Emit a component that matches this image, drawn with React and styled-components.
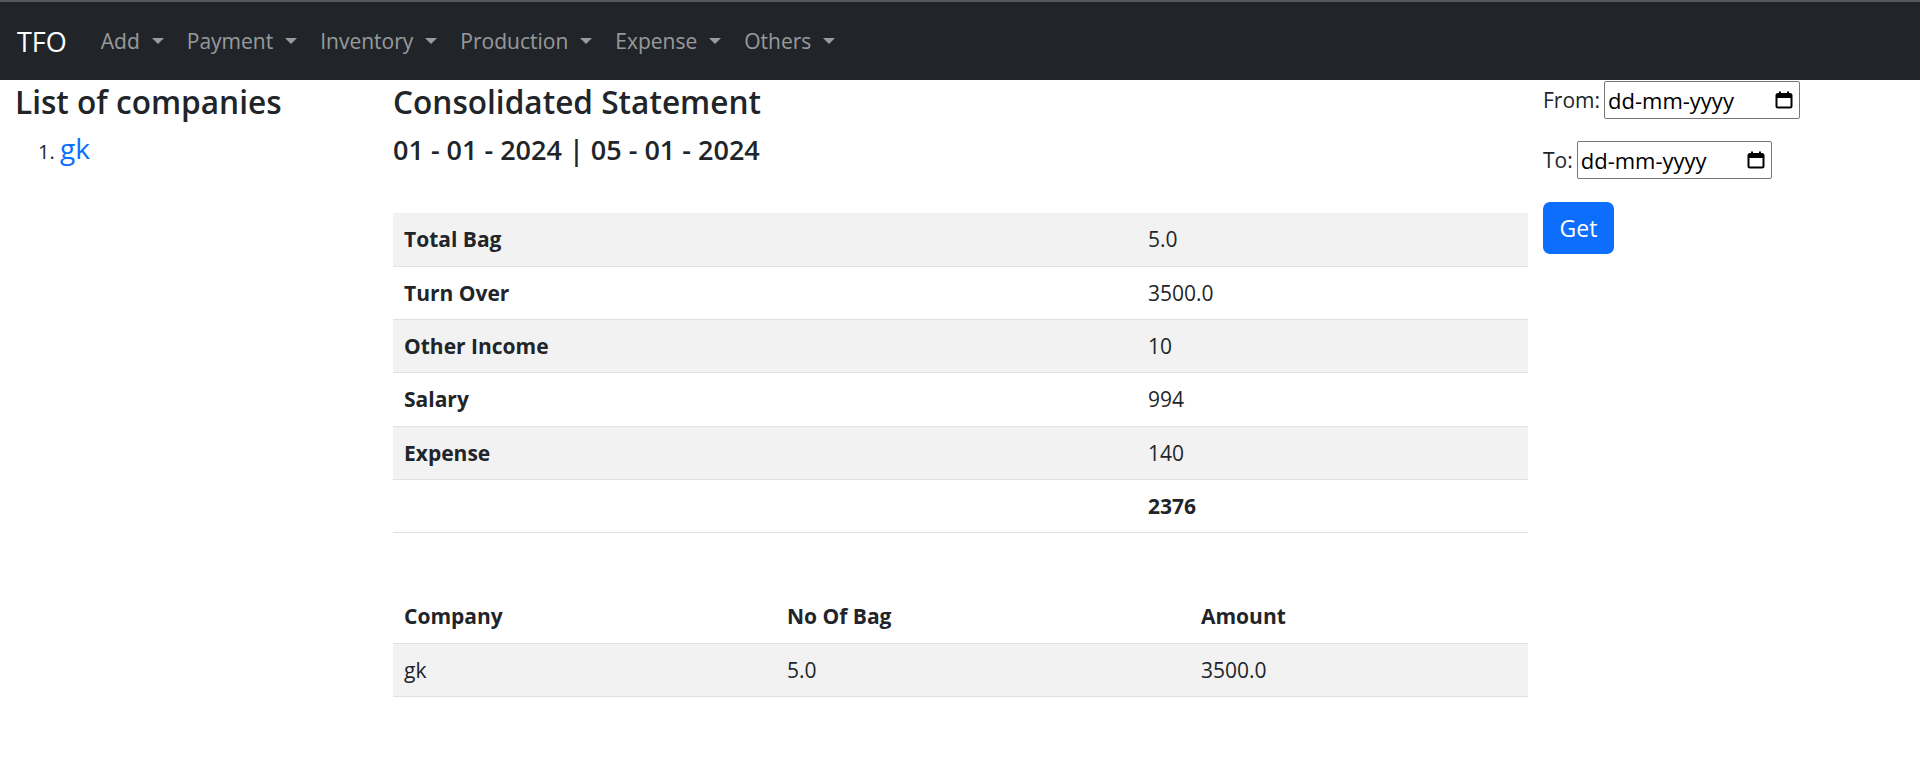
import styled, { createGlobalStyle } from 'styled-components';

const GlobalStyle = createGlobalStyle`
  body {
    margin: 0;
    font-family: "Open Sans", "Noto Sans", sans-serif;
    color: #212529;
    background: #fff;
  }
`;

const Navbar = styled.nav`
  display: flex;
  align-items: center;
  height: 78px;
  border-top: 2px solid #55585c;
  background: #212529;
  padding: 0 17px;
`;

const Brand = styled.a`
  color: #fff;
  font-size: 27px;
  margin-right: 34px;
  text-decoration: none;
`;

const NavMenu = styled.ul`
  display: flex;
  gap: 23px;
  list-style: none;
  margin: 0;
  padding: 0;
`;

const NavLink = styled.a`
  display: flex;
  align-items: center;
  color: rgba(255, 255, 255, 0.55);
  font-size: 21px;
  text-decoration: none;

  &::after {
    content: "";
    margin-left: 12px;
    border-top: 6px solid;
    border-left: 6px solid transparent;
    border-right: 6px solid transparent;
  }
`;

const Main = styled.main`
  display: grid;
  grid-template-columns: 393px 1135px 1fr;
`;

const Sidebar = styled.aside`
  padding-left: 15px;
`;

const Heading = styled.h4`
  font-size: 31.6px;
  font-weight: 600;
  line-height: 1.2;
  margin: 3px 0 ${(p) => p.$gap || 0}px;
`;

const SubHeading = styled.h5`
  font-size: 27px;
  font-weight: 600;
  line-height: 1.2;
  margin: 0 0 47px;
`;

const CompanyList = styled.ol`
  margin: 6px 0 0;
  padding-left: 45px;
  font-size: 20px;
  line-height: 1.5;
`;

const CompanyLink = styled.a`
  color: #0d6efd;
  font-size: 28px;
  text-decoration: none;
`;

const Content = styled.section``;

const Table = styled.table`
  width: 100%;
  border-collapse: separate;
  border-spacing: 0;
  font-size: 21px;
  margin-bottom: ${(p) => p.$gap || 0}px;
`;

const Row = styled.tr`
  background: ${(p) => (p.$striped ? '#f2f2f2' : '#fff')};
`;

const Cell = styled.td`
  padding: 14px 11px;
  line-height: 24.33px;
  border-bottom: 1px solid #dee2e6;
  font-weight: ${(p) => (p.$bold ? 700 : 400)};
  width: ${(p) => p.$w || 'auto'};
  text-align: left;
`;

const Side = styled.div`
  padding: 1px 0 0 15px;
  display: flex;
  flex-direction: column;
  align-items: flex-start;
  gap: 22px;
`;

const Field = styled.label`
  display: flex;
  align-items: center;
  gap: 4px;
  font-size: 21px;
`;

const DateBox = styled.div`
  box-sizing: border-box;
  width: ${(p) => p.$w}px;
  height: 38px;
  border: 1px solid #767676;
  border-radius: 2px;
  display: flex;
  align-items: center;
  justify-content: space-between;
  padding: 0 6px 0 3px;
  font-size: 22px;
  color: #000;
`;

const Button = styled.button`
  margin-top: 1px;
  width: 71px;
  height: 52px;
  border: none;
  border-radius: 7px;
  background: #0d6efd;
  color: #fff;
  font-family: inherit;
  font-size: 23px;
`;

const CalendarIcon = () => (
  <svg width="18" height="18" viewBox="0 0 18 18">
    <rect x="1.5" y="3" width="15" height="13.5" rx="1.5" fill="none" stroke="#000" strokeWidth="2" />
    <rect x="1.5" y="3" width="15" height="4" fill="#000" />
    <rect x="4" y="0.5" width="2" height="3" fill="#000" />
    <rect x="12" y="0.5" width="2" height="3" fill="#000" />
  </svg>
);

const DateInput = ({ label, width }) => (
  <Field>
    {label}
    <DateBox $w={width}>
      <span>dd-mm-yyyy</span>
      <CalendarIcon />
    </DateBox>
  </Field>
);

const menu = ['Add', 'Payment', 'Inventory', 'Production', 'Expense', 'Others'];

const summary = [
  ['Total Bag', '5.0'],
  ['Turn Over', '3500.0'],
  ['Other Income', '10'],
  ['Salary', '994'],
  ['Expense', '140'],
];

export default function App() {
  return (
    <>
      <GlobalStyle />
      <Navbar>
        <Brand href="#">TFO</Brand>
        <NavMenu>
          {menu.map((m) => (
            <li key={m}>
              <NavLink href="#">{m}</NavLink>
            </li>
          ))}
        </NavMenu>
      </Navbar>
      <Main>
        <Sidebar>
          <Heading>List of companies</Heading>
          <CompanyList>
            <li>
              <CompanyLink href="#">gk</CompanyLink>
            </li>
          </CompanyList>
        </Sidebar>
        <Content>
          <Heading $gap={13}>Consolidated Statement</Heading>
          <SubHeading>01 - 01 - 2024 | 05 - 01 - 2024</SubHeading>
          <Table $gap={57}>
            <tbody>
              {summary.map(([k, v], i) => (
                <Row key={k} $striped={i % 2 === 0}>
                  <Cell $bold $w="722px">{k}</Cell>
                  <Cell>{v}</Cell>
                </Row>
              ))}
              <Row>
                <Cell />
                <Cell $bold>2376</Cell>
              </Row>
            </tbody>
          </Table>
          <Table>
            <thead>
              <Row>
                <Cell as="th" $bold $w="361px">Company</Cell>
                <Cell as="th" $bold $w="392px">No Of Bag</Cell>
                <Cell as="th" $bold>Amount</Cell>
              </Row>
            </thead>
            <tbody>
              <Row $striped>
                <Cell>gk</Cell>
                <Cell>5.0</Cell>
                <Cell>3500.0</Cell>
              </Row>
            </tbody>
          </Table>
        </Content>
        <Side>
          <DateInput label="From:" width={196} />
          <DateInput label="To:" width={195} />
          <Button>Get</Button>
        </Side>
      </Main>
    </>
  );
}
